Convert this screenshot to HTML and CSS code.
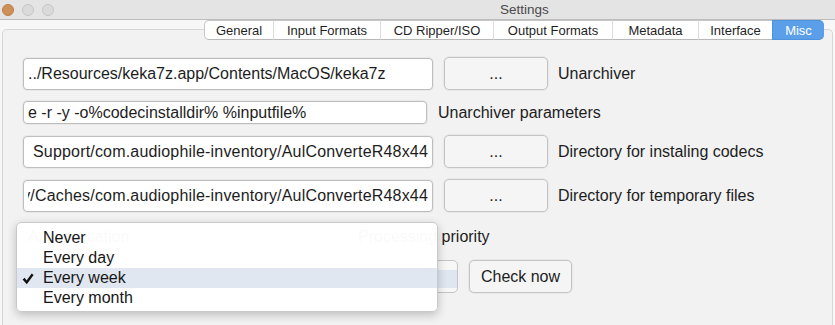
FILE: index.html
```html
<!DOCTYPE html>
<html lang="en">
<head>
  <meta charset="UTF-8">
  <title>Settings</title>
  <link rel="stylesheet" href="styles.css">
</head>
<body>
  <div class="window">
    <!-- Title bar -->
    <div class="titlebar">
      <div class="lights">
        <span class="light light-close"></span>
        <span class="light"></span>
        <span class="light"></span>
      </div>
      <div class="title">Settings</div>
    </div>

    <div class="pane">
      <div class="tabbox">
        <!-- Tabs -->
        <div class="tabs">
          <div class="tab tab-general">General</div>
          <div class="tab tab-input">Input Formats</div>
          <div class="tab tab-cd">CD Ripper/ISO</div>
          <div class="tab tab-output">Output Formats</div>
          <div class="tab tab-meta">Metadata</div>
          <div class="tab tab-iface">Interface</div>
          <div class="tab tab-misc active">Misc</div>
        </div>

        <!-- Form -->
        <div class="form">
          <div class="row row-tall">
            <div class="field field-wide"><span class="field-text">../Resources/keka7z.app/Contents/MacOS/keka7z</span></div>
            <button class="btn btn-browse">...</button>
            <span class="label">Unarchiver</span>
          </div>

          <div class="row row-short">
            <div class="field field-params"><span class="field-text">e -r -y -o%codecinstalldir% %inputfile%</span></div>
            <span class="label">Unarchiver parameters</span>
          </div>

          <div class="row row-tall">
            <div class="field field-wide field-end"><span class="field-text">Library/Application Support/com.audiophile-inventory/AulConverteR48x44</span></div>
            <button class="btn btn-browse">...</button>
            <span class="label">Directory for instaling codecs</span>
          </div>

          <div class="row row-tall">
            <div class="field field-wide field-end"><span class="field-text">~/Library/Caches/com.audiophile-inventory/AulConverteR48x44</span></div>
            <button class="btn btn-browse">...</button>
            <span class="label">Directory for temporary files</span>
          </div>

          <div class="row row-priority">
            <span class="ghost">Authentication</span>
            <span class="label">Processing priority</span>
          </div>

          <div class="row row-tall row-update">
            <div class="popup"></div>
            <button class="btn btn-check">Check now</button>
          </div>
        </div>
      </div>
    </div>

    <!-- Open popup menu -->
    <div class="menu">
      <div class="menu-item">Never</div>
      <div class="menu-item">Every day</div>
      <div class="menu-item selected">
        <svg class="check" width="12" height="12" viewBox="0 0 12 12"><path d="M0.6 6.4 L2.7 4.8 L4.6 7.4 L9.7 0.6 L11.6 1.9 L4.8 11.2 Z" fill="#111"/></svg>
        Every week
      </div>
      <div class="menu-item">Every month</div>
    </div>
  </div>
</body>
</html>
```

FILE: styles.css
```css
/* Base */
* {
  margin: 0;
  padding: 0;
  box-sizing: border-box;
}

body {
  font-family: 'Liberation Sans', Arial, sans-serif;
  color: #1d1d1d;
  background: #f7f7f7;
  overflow: hidden;
}

.window {
  position: relative;
  width: 835px;
  height: 325px;
  background: #f7f7f7;
  overflow: hidden;
}

/* Title bar */
.titlebar {
  display: flex;
  align-items: center;
  height: 20px;
  background: #e4e4e4;
  border-bottom: 1px solid #bcbcbc;
}

.lights {
  display: flex;
  gap: 8px;
  padding-left: 2px;
}

.light {
  width: 12px;
  height: 12px;
  border-radius: 50%;
  background: #dadada;
  border: 1px solid #c6c6c6;
}

.light-close {
  background: #cf9057;
  border-color: #b97d46;
}

.title {
  margin-left: 446px;
  font-size: 13.5px;
  color: #4a4a4a;
}

/* Tab box */
.pane {
  padding: 9px 2px 0;
  height: 305px;
}

.tabbox {
  height: 100%;
  background: #f2f2f2;
  border: 1px solid #d6d6d6;
  border-bottom: none;
  border-radius: 5px 5px 0 0;
}

.tabs {
  display: flex;
  margin: -10px 0 0 201px;
  height: 20px;
}

.tab {
  display: flex;
  align-items: center;
  justify-content: center;
  height: 20px;
  font-size: 13px;
  background: #fff;
  border-top: 1px solid #c6c6c6;
  border-bottom: 1px solid #b8b8b8;
  border-left: 1px solid #dcdcdc;
  color: #1f1f1f;
}

.tab-general {
  width: 69px;
  border-left-color: #c6c6c6;
  border-radius: 5px 0 0 5px;
}
.tab-input { width: 107px; }
.tab-cd { width: 113px; }
.tab-output { width: 119px; }
.tab-meta { width: 86px; }
.tab-iface { width: 74px; }
.tab-misc {
  width: 52px;
  border-radius: 0 5px 5px 0;
}

.tab.active {
  background: #5a9fe7;
  border-color: #4c92dc;
  color: #fff;
}

/* Form rows */
.form {
  padding: 17px 0 0 20px;
}

.row {
  display: flex;
  align-items: center;
  margin-top: 11px;
}

.row:first-child {
  margin-top: 0;
}

.row-tall { height: 33px; }
.row-short { height: 23px; }
.row-priority { height: 28px; }
.row-update { margin-top: 9px; }

.field {
  display: flex;
  align-items: center;
  height: 32px;
  padding: 0 4px;
  background: #fff;
  border: 1px solid #bdbdbd;
  border-radius: 4px;
  box-shadow: 0 0 0 1px rgba(0, 0, 0, 0.04);
  font-size: 16px;
  white-space: nowrap;
}

.field-text {
  flex: 1;
  display: flex;
  overflow: hidden;
}

.field-end .field-text {
  justify-content: flex-end;
  letter-spacing: 0.18px;
}

.field-wide { width: 410px; }

.field-params {
  width: 404px;
  height: 23px;
}

.btn {
  font-family: inherit;
  font-size: 16px;
  color: #1d1d1d;
  height: 33px;
  background: #f5f5f5;
  border: 1px solid #c4c4c4;
  border-radius: 5px;
  box-shadow: 0 0 0 1px rgba(0, 0, 0, 0.04);
  margin-left: 11px;
}

.btn-browse { width: 104px; }
.btn-check { width: 103px; }

.label {
  font-size: 16px;
  margin-left: 10px;
}

.row-short .label { margin-left: 11px; }

.ghost {
  width: 325px;
  padding-left: 5px;
  font-size: 16px;
}

.popup {
  width: 435px;
  height: 33px;
  border: 1px solid #c4c4c4;
  border-radius: 5px;
  background: linear-gradient(to bottom, #f7f7f7 0, #f7f7f7 9px, #dfe6f0 9px, #dfe6f0 27px, #f7f7f7 27px);
}

/* Popup menu */
.menu {
  position: absolute;
  top: 222px;
  left: 16px;
  width: 422px;
  padding: 5px 0 3px;
  background: rgba(255, 255, 255, 0.975);
  border: 1px solid #c9c9c9;
  border-radius: 5px;
  box-shadow: 0 3px 10px rgba(0, 0, 0, 0.22);
}

.menu-item {
  position: relative;
  height: 20px;
  line-height: 20px;
  padding-left: 26px;
  font-size: 16px;
  color: #161616;
}

.menu-item.selected {
  background: #e0e7f1;
}

.check {
  position: absolute;
  left: 5px;
  top: 5px;
}
```
